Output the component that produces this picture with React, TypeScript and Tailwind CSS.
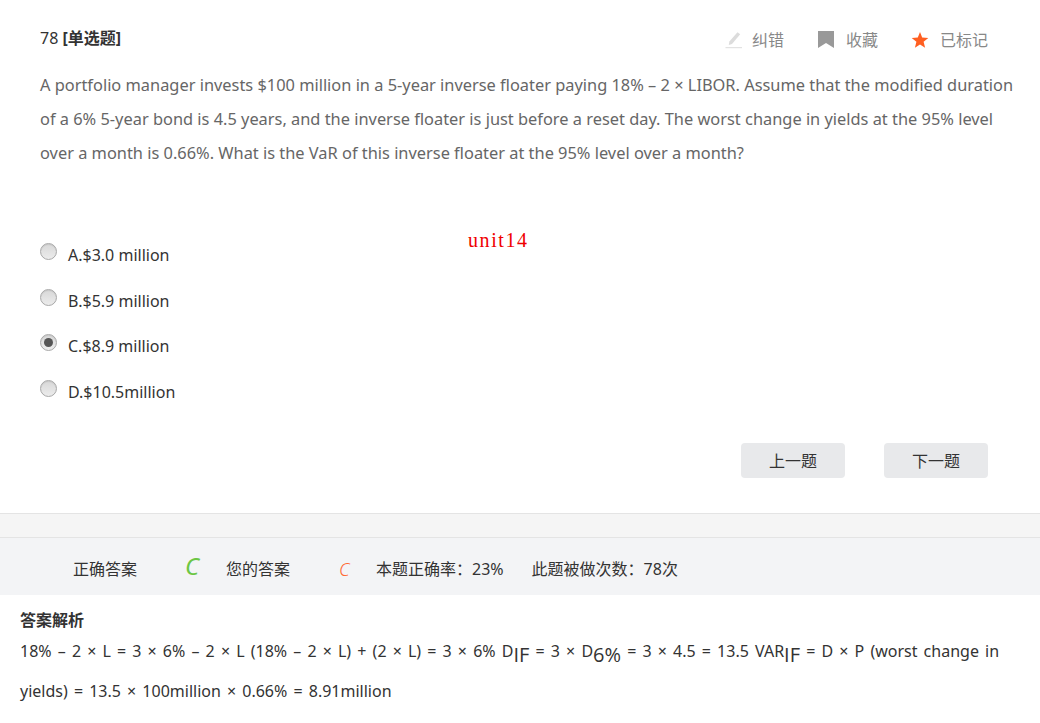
import React from "react";

const font = { fontFamily: '"Noto Sans", "Noto Sans CJK SC", sans-serif' };
const subFont = { fontFamily: '"Open Sans", "Noto Sans CJK SC", sans-serif' };

function Radio({ checked }: { checked?: boolean }) {
  return (
    <span className="flex h-[17px] w-[17px] items-center justify-center rounded-full border border-[#a8a8a8] bg-gradient-to-b from-[#d8d8d8] to-[#ececec] shadow-[inset_0_1px_1px_rgba(0,0,0,0.08)]">
      {checked && <span className="block h-[9px] w-[9px] rounded-full bg-[#555]" />}
    </span>
  );
}

function Option({ label, checked }: { label: string; checked?: boolean }) {
  return (
    <div className="flex h-[45.5px] items-start">
      <Radio checked={checked} />
      <span className="ml-[11px] text-[16px] leading-[24px] text-[#333]">{label}</span>
    </div>
  );
}

function Sub({ children }: { children: React.ReactNode }) {
  return (
    <sub className="text-[20px] leading-[0]" style={subFont}>
      {children}
    </sub>
  );
}

export default function App() {
  return (
    <div className="h-[723px] w-[1040px] overflow-hidden bg-white" style={font}>
      <div className="h-[514px] border-b border-[#e4e4e4] pl-[40px] pr-[20px] pt-[26px]">
        <div className="flex h-[27px] items-start justify-between pr-[32px]">
          <div className="text-[16px] leading-[24px] text-[#333]">
            78 <span className="font-bold">[单选题]</span>
          </div>
          <div className="flex items-center pt-[2px] text-[16px] leading-[24px] text-[#888]">
            <svg width="18" height="18" viewBox="0 0 18 18" className="mr-[9px]">
              <path d="M12.5 1.2 L15.2 3.2 L7 13 L3.8 14 L4.4 10.6 Z" fill="#dcdcdc" />
              <rect x="0.5" y="16" width="16.5" height="1.2" fill="#e2e2e2" />
            </svg>
            <span>纠错</span>
            <svg width="16" height="18" viewBox="0 0 16 18" className="ml-[34px] mr-[12px]">
              <path d="M0 0 H16 V17 L8 12 L0 17 Z" fill="#999" />
            </svg>
            <span>收藏</span>
            <svg width="18" height="18" viewBox="0 0 18 18" className="ml-[33px] mr-[11px]">
              <path d="M9 1 L11.2 6.6 L17.3 7 L12.6 10.8 L14.1 16.8 L9 13.5 L3.9 16.8 L5.4 10.8 L0.7 7 L6.8 6.6 Z" fill="#ff5f21" />
            </svg>
            <span>已标记</span>
          </div>
        </div>
        <p className="mt-[15px] text-[16.39px] leading-[34px] text-[#666]">
          A portfolio manager invests $100 million in a 5-year inverse floater paying 18% – 2 × LIBOR. Assume that the modified duration of a 6% 5-year bond is 4.5 years, and the inverse floater is just before a reset day. The worst change in yields at the 95% level over a month is 0.66%. What is the VaR of this inverse floater at the 95% level over a month?
        </p>
        <div className="relative mt-[73px]">
          <Option label="A.$3.0 million" />
          <Option label="B.$5.9 million" />
          <Option label="C.$8.9 million" checked />
          <Option label="D.$10.5million" />
          <span
            className="absolute left-[428px] top-[-15px] text-[20px] leading-[24px] tracking-[1.6px] text-[#f00000]"
            style={{ fontFamily: '"Liberation Serif", serif' }}
          >
            unit14
          </span>
        </div>
        <div className="mt-[18px] flex justify-end gap-[39px] pr-[32px]">
          <button className="h-[35px] w-[104px] rounded-[4px] bg-[#e8e9eb] text-[16px] text-[#333]">上一题</button>
          <button className="h-[35px] w-[104px] rounded-[4px] bg-[#e8e9eb] text-[16px] text-[#333]">下一题</button>
        </div>
      </div>
      <div className="h-[24px] border-b border-[#e4e4e4] bg-[#f5f5f5]" />
      <div className="flex h-[57px] items-center bg-[#f3f4f6] pl-[73px] pt-[4px] text-[16px] text-[#333]">
        <span className="w-[65px]">正确答案</span>
        <span className="ml-[47px] -mt-[6px] w-[41px] text-[24px] italic leading-none text-[#6cc644]">C</span>
        <span className="w-[65px]">您的答案</span>
        <span className="ml-[48px] w-[37px] text-[18px] font-light italic leading-none text-[#ff6a33]">C</span>
        <span>本题正确率：23%</span>
        <span className="ml-[28px]">此题被做次数：78次</span>
      </div>
      <div className="px-[20px] pt-[12px] text-[#333]">
        <div className="text-[16px] font-bold leading-[26px]">答案解析</div>
        <p className="-mt-[2px] text-[16px] leading-[40px] [word-spacing:1.98px]">
          18% – 2 × L = 3 × 6% – 2 × L (18% – 2 × L) + (2 × L) = 3 × 6% D<Sub>IF</Sub> = 3 × D<Sub>6%</Sub> = 3 × 4.5 = 13.5 VAR<Sub>IF</Sub> = D × P (worst change in yields) = 13.5 × 100million × 0.66% = 8.91million
        </p>
      </div>
    </div>
  );
}
